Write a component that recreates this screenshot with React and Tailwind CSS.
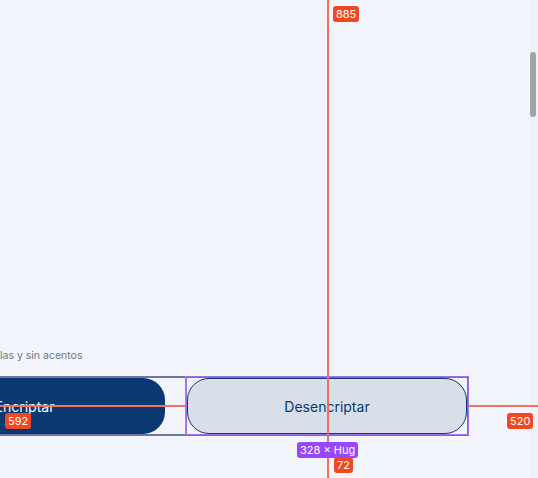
import React from "react";

// small measurement tag, Figma style
const Tag = ({ className = "", children }) => (
  <span
    className={`absolute rounded-[3px] px-[3px] text-[11px] leading-[16px] text-white ${className}`}
  >
    {children}
  </span>
);

export default function App() {
  return (
    <div
      className="relative h-[478px] w-[538px] overflow-hidden bg-[#f2f5fc]"
      style={{ fontFamily: "Inter, 'Liberation Sans', sans-serif" }}
    >
      <div className="flex flex-col pt-[348px]">
        <p className="text-[10.5px] leading-[16px] text-[#6f747c]">
          las y sin acentos
        </p>

        {/* button frame */}
        <div className="mt-[12px] ml-[-120px] flex w-[589px] gap-[22px] border-2 border-[#6f74a0] pl-[2px]">
          <button className="h-[56px] w-[281px] shrink-0 rounded-[22px] bg-[#0a3871] text-[14px] text-white">
            Encriptar
          </button>
          <button className="h-[56px] w-[280px] shrink-0 rounded-[22px] border border-[#0a3871] bg-[#d8dfe8] text-[14px] text-[#0a3871]">
            Desencriptar
          </button>
        </div>
      </div>

      {/* scrollbar */}
      <div className="absolute right-0 top-0 h-full w-[8px] bg-[#eef1f8]" />
      <div className="absolute left-[530px] top-[52px] h-[65px] w-[6px] rounded-full bg-[#a3a3a6]" />

      {/* measurement overlay */}
      <div className="absolute left-[327px] top-0 h-full w-[2px] bg-[#f2705f]" />
      <div className="absolute left-0 top-[405px] h-[2px] w-[186px] bg-[#f2705f]" />
      <div className="absolute left-[469px] top-[405px] h-[2px] w-[69px] bg-[#f2705f]" />
      <div className="absolute left-[185px] top-[376px] h-[59px] w-[2px] bg-[#f2705f]" />
      <div className="absolute left-[186px] top-[376px] h-[59px] w-[283px] border border-[#a070e8]" />

      <Tag className="left-[333px] top-[6px] bg-[#f24822]">885</Tag>
      <Tag className="left-[5px] top-[413px] bg-[#f24822]">592</Tag>
      <Tag className="left-[507px] top-[413px] bg-[#f24822]">520</Tag>
      <Tag className="left-[297px] top-[442px] bg-[#9747ff]">328 × Hug</Tag>
      <Tag className="left-[334px] top-[457px] bg-[#f24822]">72</Tag>
    </div>
  );
}
